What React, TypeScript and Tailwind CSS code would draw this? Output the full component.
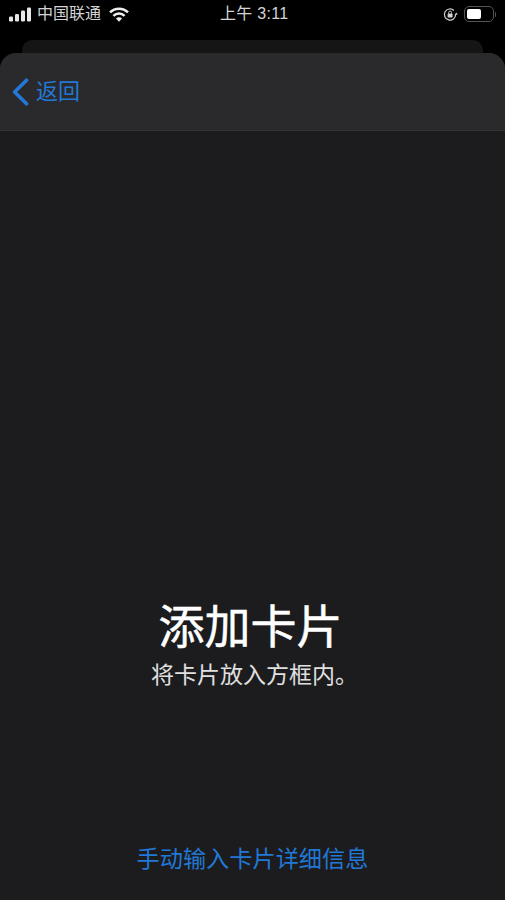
const font = '[font-family:"Liberation_Sans","Noto_Sans_CJK_SC",sans-serif]';

function StatusBar() {
  return (
    <div className="flex h-10 items-start px-[9px] pt-[5px] text-[#d4d4d4]">
      <div className="flex h-[18px] w-[211px] items-center">
        <svg width="23" height="15" viewBox="0 0 23 15" fill="#e6e6e6">
          <rect x="0" y="9.5" width="4" height="5" rx="1.2" />
          <rect x="6" y="7" width="4" height="7.5" rx="1.2" />
          <rect x="12" y="3.5" width="4" height="11" rx="1.2" />
          <rect x="18" y="0.5" width="4" height="14" rx="1.2" />
        </svg>
        <span className="ml-[5px] text-[16px] leading-[18px]">中国联通</span>
        <svg className="ml-[8px]" width="20" height="15" viewBox="0 0 20 15" fill="none" stroke="#eeeeee" strokeWidth="2.5">
          <path d="M1 5.4a12.8 12.8 0 0 1 18 0" />
          <path d="M4.4 8.8a8 8 0 0 1 11.2 0" />
          <path d="M10 14.8l-3-3.4a4.2 4.2 0 0 1 6 0z" fill="#eeeeee" stroke="none" />
        </svg>
      </div>
      <span className="text-[16px] leading-[18px] tracking-[0.3px] whitespace-nowrap">上午 3:11</span>
      <div className="ml-auto flex h-[18px] items-center gap-[6px]">
        <svg width="15" height="15" viewBox="0 0 15 15" fill="none">
          <path d="M12.6 7.5a5.6 5.6 0 1 1-1.7-4" stroke="#d4d4d4" strokeWidth="1.2" />
          <path d="M14.8 7.6l-3.2.4 1.6-2.6z" fill="#d4d4d4" />
          <rect x="4.6" y="6.6" width="5" height="4" rx="0.8" fill="#d4d4d4" />
          <path d="M5.6 6.6V5.6a1.5 1.5 0 0 1 3 0v1" stroke="#d4d4d4" strokeWidth="0.9" />
        </svg>
        <div className="flex items-center">
          <div className="h-[16px] w-[30px] rounded-[5px] border border-[#555555] p-[2px]">
            <div className="h-full w-[14px] rounded-[2px] bg-white" />
          </div>
          <div className="ml-px h-[5px] w-px rounded-r-sm bg-[#555555]" />
        </div>
      </div>
    </div>
  );
}

export default function App() {
  return (
    <div className={`flex h-[900px] w-[505px] flex-col overflow-hidden bg-black ${font}`}>
      <StatusBar />
      <div className="mx-[22px] h-[13px] rounded-t-[10px] bg-[#151515]" />
      <div className="flex min-h-0 flex-1 flex-col overflow-hidden rounded-t-[16px] bg-[#1c1c1e]">
        <header className="flex h-[78px] items-center border-b border-[#323234] bg-[#2a2a2c] pl-[12px] text-[#2178d6]">
          <svg width="17" height="28" viewBox="0 0 17 28" fill="none" stroke="currentColor" strokeWidth="3.6" strokeLinecap="round" strokeLinejoin="round">
            <path d="M14.5 2.2L2.6 14l11.9 11.8" />
          </svg>
          <span className="ml-[7px] text-[22px] leading-7">返回</span>
        </header>

        <div className="flex flex-1 flex-col items-center">
          <h1 className="mt-[469px] pr-[4px] text-[46px] leading-[54px] font-normal text-white [-webkit-text-stroke:0.5px_white]">添加卡片</h1>
          <p className="mt-[6px] pl-1 text-[23px] leading-[30px] text-[#e0e0e0]">将卡片放入方框内。</p>
          <button className="mt-[154px] text-[23.2px] leading-[30px] text-[#2178d6]">手动输入卡片详细信息</button>
        </div>
      </div>
    </div>
  );
}
